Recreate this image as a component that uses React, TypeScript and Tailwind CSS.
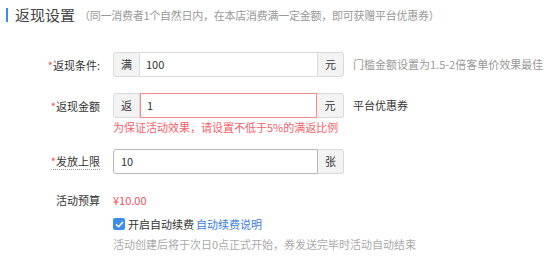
import React from "react";

const font = { fontFamily: '"Noto Sans CJK SC", "Noto Sans", sans-serif' };

function Label({ text, req, colon, dotted }: { text: string; req?: boolean; colon?: boolean; dotted?: boolean }) {
  return (
    <div className="w-[100px] flex justify-end text-[11px] leading-[16px] text-[#333]">
      <span className={dotted ? "border-b border-dotted border-[#999]" : ""}>
        {req && <span className="text-[#f5505a]">*</span>}
        {text}
        {colon && ":"}
      </span>
    </div>
  );
}

function Addon({ text, side }: { text: string; side: "l" | "r" }) {
  return (
    <div
      className={
        "w-[27px] h-full flex items-center justify-center bg-[#f3f3f3] border-[#d9d9d9] text-[11px] text-[#333] " +
        (side === "l" ? "border rounded-l-[3px]" : "border rounded-r-[3px]")
      }
    >
      {text}
    </div>
  );
}

export default function App() {
  return (
    <div className="w-[554px] h-[263px] bg-white overflow-hidden" style={font}>
      <div className="flex items-center pl-[6px] pt-[8px]">
        <div className="w-[2px] h-[14px] bg-[#3d8ee8]" />
        <span className="ml-[7px] text-[15px] leading-[14px] text-[#444]">返现设置</span>
        <span className="ml-[4px] text-[11px] leading-[14px] text-[#999] tracking-[-0.25px]">（同一消费者1个自然日内，在本店消费满一定金额，即可获赠平台优惠券）</span>
      </div>

      <div className="flex items-center mt-[30px]">
        <Label text="返现条件" req colon />
        <div className="ml-[13px] flex h-[25px] w-[231px]">
          <Addon text="满" side="l" />
          <div className="flex-1 h-full border-y border-[#d9d9d9] flex items-center pl-[6px] text-[11px] text-[#333]">100</div>
          <Addon text="元" side="r" />
        </div>
        <span className="ml-[9px] text-[11px] text-[#999]">门槛金额设置为1.5-2倍客单价效果最佳</span>
      </div>

      <div className="flex items-center mt-[16px]">
        <Label text="返现金额" req />
        <div className="ml-[13px] flex h-[25px] w-[231px]">
          <Addon text="返" side="l" />
          <div className="flex-1 h-full border border-[#f58a8a] flex items-center pl-[6px] text-[11px] text-[#333]">1</div>
          <div className="w-[27px] h-full flex items-center justify-center bg-[#f3f3f3] border-y border-r border-[#d9d9d9] rounded-r-[3px] text-[11px] text-[#333]">元</div>
        </div>
        <span className="ml-[9px] text-[11px] text-[#333]">平台优惠券</span>
      </div>
      <div className="ml-[113px] mt-[2px] text-[11px] leading-[14px] text-[#f5616b]">为保证活动效果，请设置不低于5%的满返比例</div>

      <div className="flex items-center mt-[15px]">
        <Label text="发放上限" req dotted />
        <div className="ml-[13px] flex h-[25px] w-[231px]">
          <div className="flex-1 h-full border border-[#b8b8b8] rounded-l-[3px] flex items-center pl-[7px] text-[11px] text-[#333]">10</div>
          <div className="w-[26px] h-full flex items-center justify-center bg-[#f3f3f3] border-y border-r border-[#d9d9d9] rounded-r-[3px] text-[11px] text-[#333]">张</div>
        </div>
      </div>

      <div className="flex items-center mt-[18px]">
        <Label text="活动预算" />
        <span className="ml-[13px] text-[11px] leading-[16px] text-[#f5505a]">¥10.00</span>
      </div>

      <div className="flex items-center ml-[113px] mt-[8px] h-[16px]">
        <div className="w-[12px] h-[12px] rounded-[2px] bg-[#3d8ee8] flex items-center justify-center">
          <svg width="9" height="9" viewBox="0 0 10 10">
            <path d="M1.5 5.2 L4 7.6 L8.5 2.6" stroke="white" strokeWidth="1.6" fill="none" strokeLinecap="round" strokeLinejoin="round" />
          </svg>
        </div>
        <span className="ml-[3px] text-[11px] text-[#333]">开启自动续费</span>
        <span className="ml-[2px] text-[11px] text-[#3b7dd8]">自动续费说明</span>
      </div>

      <div className="ml-[113px] mt-[4px] text-[11px] leading-[16px] text-[#aaa]">活动创建后将于次日0点正式开始，券发送完毕时活动自动结束</div>
    </div>
  );
}
